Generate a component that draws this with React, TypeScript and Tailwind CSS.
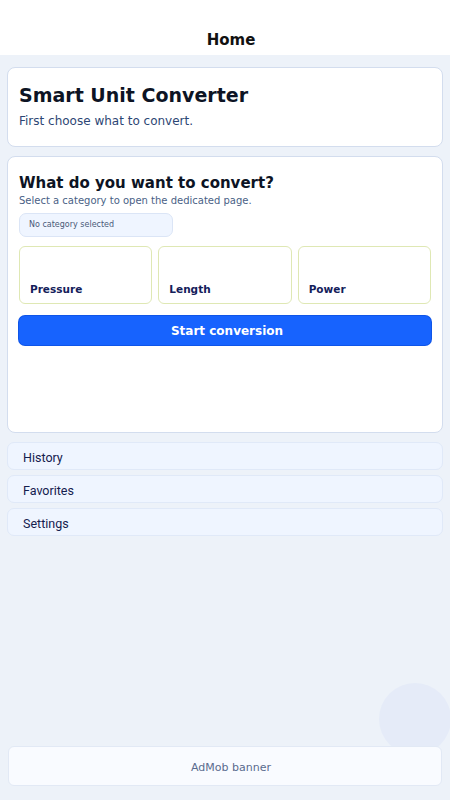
import React from "react"

const categories = ["Pressure", "Length", "Power"]
const links = ["History", "Favorites", "Settings"]

export default function App() {
  return (
    <div className="relative flex h-[800px] w-[450px] flex-col overflow-hidden bg-[#edf2f9] font-['DejaVu_Sans',sans-serif]">
      {/* Header */}
      <div className="flex h-[55px] items-end justify-center bg-white pb-[5px] pl-[12px]">
        <span className="text-[15px] font-bold leading-[20px] text-[#111111]">Home</span>
      </div>

      <div className="flex flex-col px-[7px] pt-[12px]">
        {/* Title card */}
        <div className="flex h-[80px] flex-col rounded-[8px] border border-[#d3ddee] bg-white px-[11px] pt-[15px]">
          <h1 className="text-[19px] font-bold leading-[24px] text-[#0d1424]">Smart Unit Converter</h1>
          <p className="mt-[6px] text-[12px] leading-[16px] text-[#2d4674]">First choose what to convert.</p>
        </div>

        {/* Converter card */}
        <div className="mt-[9px] flex h-[277px] flex-col rounded-[8px] border border-[#d3ddee] bg-white px-[11px] pt-[16px]">
          <h2 className="text-[15px] font-bold leading-[20px] text-[#0d1424]">What do you want to convert?</h2>
          <p className="mt-[1px] text-[10px] leading-[13px] text-[#4a5f86]">Select a category to open the dedicated page.</p>
          <div className="mt-[6px] flex h-[24px] w-[154px] items-center rounded-[7px] border border-[#dbe5f6] bg-[#eff5ff] px-[9px]">
            <span className="text-[8px] text-[#4a5a78]">No category selected</span>
          </div>
          <div className="mt-[9px] grid grid-cols-3 gap-[6px]">
            {categories.map((c) => (
              <div
                key={c}
                className="flex h-[58px] items-end rounded-[6px] border border-[#dfe8b4] bg-white px-[10px] pb-[5px]"
              >
                <span className="text-[10.5px] font-bold text-[#13205a]">{c}</span>
              </div>
            ))}
          </div>
          <button
            type="button"
            className="mt-[12px] flex h-[29px] items-center justify-center rounded-[6px] bg-[#1763fe] pl-[4px] text-[12px] font-bold text-white shadow-[0_0_0_1px_#0f55e8]"
          >
            Start conversion
          </button>
        </div>

        {/* Links */}
        <div className="mt-[9px] flex flex-col gap-[5px]">
          {links.map((l) => (
            <div
              key={l}
              className="flex h-[28px] items-center rounded-[7px] border border-[#e0e9f8] bg-[#eff5ff] px-[15px] pt-[5px]"
            >
              <span className="font-['Roboto',sans-serif] text-[12.5px] text-[#14204e]">{l}</span>
            </div>
          ))}
        </div>
      </div>

      {/* decoration */}
      <div className="absolute left-[379px] top-[683px] h-[72px] w-[72px] rounded-full bg-[#e5ebf8]" />

      {/* Ad banner */}
      <div className="absolute bottom-[14px] left-[8px] right-[8px] flex h-[40px] items-center justify-center rounded-[6px] border border-[#e2e9f5] bg-[#f9fbff] pl-[12px] pt-[5px]">
        <span className="text-[11px] text-[#5a6b8e]">AdMob banner</span>
      </div>
    </div>
  )
}
